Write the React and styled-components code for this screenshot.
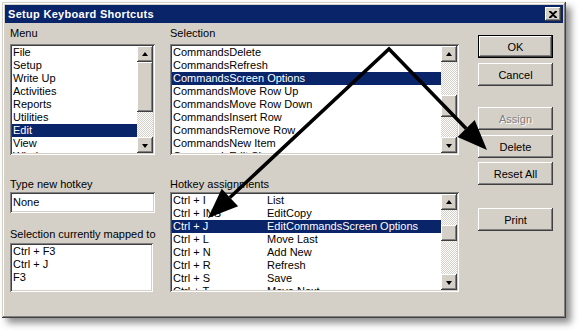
import styled, { createGlobalStyle, css } from "styled-components";

const GlobalStyle = createGlobalStyle`
  body {
    margin: 0;
    background: #ffffff;
    font-family: "Liberation Sans", Arial, sans-serif;
  }
`;

const navy = "#0a246a";
const face = "#d4d0c8";

const raised = css`
  box-shadow: inset -1px -1px #404040, inset 1px 1px #ffffff,
    inset -2px -2px #808080, inset 2px 2px ${face};
`;

const sunken = css`
  box-shadow: inset 1px 1px #808080, inset -1px -1px #ffffff,
    inset 2px 2px #404040, inset -2px -2px ${face};
`;

// Page and window
const Page = styled.div`
  position: relative;
  width: 580px;
  height: 332px;
  padding: 2px 0 0 2px;
  box-sizing: border-box;
`;

const Window = styled.div`
  width: 564px;
  height: 316px;
  box-sizing: border-box;
  background: ${face};
  padding: 3px;
  display: flex;
  flex-direction: column;
  box-shadow: inset -1px -1px #404040, inset 1px 1px ${face},
    inset -2px -2px #808080, inset 2px 2px #ffffff,
    5px 5px 7px rgba(0, 0, 0, 0.45);
`;

const TitleBar = styled.div`
  height: 18px;
  background: ${navy};
  display: flex;
  align-items: center;
  justify-content: space-between;
  padding: 0 2px 0 3px;
`;

const Title = styled.span`
  color: #ffffff;
  font-weight: bold;
  font-size: 11px;
  letter-spacing: 0.3px;
`;

const CloseButton = styled.div`
  width: 16px;
  height: 14px;
  background: ${face};
  ${raised};
  display: flex;
  align-items: center;
  justify-content: center;
`;

// Dialog body
const Body = styled.div`
  flex: 1;
  display: grid;
  grid-template-columns: 145px 289px 75px;
  column-gap: 15px;
  padding: 4px 0 0 5px;
  font-size: 11px;
  color: #000;
`;

const Column = styled.div`
  display: flex;
  flex-direction: column;
  align-items: flex-start;
`;

const ButtonColumn = styled(Column)`
  margin-left: 4px;
`;

const Label = styled.div`
  height: 13px;
  line-height: 13px;
  margin-top: ${(p) => p.$top || 0}px;
  margin-bottom: ${(p) => p.$gap || 0}px;
  white-space: nowrap;
`;

const ListBox = styled.div`
  width: ${(p) => p.$width}px;
  height: ${(p) => p.$height}px;
  box-sizing: border-box;
  padding: 2px;
  background: #ffffff;
  ${sunken};
  display: flex;
  overflow: hidden;
`;

const Items = styled.div`
  flex: 1;
  overflow: hidden;
  min-width: 0;
`;

const Item = styled.div`
  height: 13px;
  line-height: 13px;
  padding-left: 1px;
  white-space: nowrap;
  display: flex;
  background: ${(p) => (p.$selected ? navy : "transparent")};
  color: ${(p) => (p.$selected ? "#ffffff" : "#000000")};
`;

const KeyCell = styled.span`
  width: 94px;
  flex-shrink: 0;
`;

const TextBox = styled.div`
  width: 145px;
  height: 21px;
  box-sizing: border-box;
  background: #ffffff;
  ${sunken};
  padding: 0 3px;
  line-height: 21px;
`;

// Scroll bar
const ScrollBar = styled.div`
  width: 16px;
  display: flex;
  flex-direction: column;
  flex-shrink: 0;
`;

const ScrollButton = styled.div`
  width: 16px;
  height: 16px;
  box-sizing: border-box;
  background: ${face};
  ${raised};
  display: flex;
  align-items: center;
  justify-content: center;
  flex-shrink: 0;
`;

const Arrow = styled.span`
  width: 0;
  height: 0;
  border-left: 3.5px solid transparent;
  border-right: 3.5px solid transparent;
  ${(p) =>
    p.$down
      ? "border-top: 4px solid #000; margin-top: 1px;"
      : "border-bottom: 4px solid #000; margin-bottom: 1px;"}
`;

const Track = styled.div`
  height: ${(p) => (p.$fill ? "auto" : `${p.$size}px`)};
  flex: ${(p) => (p.$fill ? 1 : "none")};
  background-color: #ffffff;
  background-image: conic-gradient(${face} 25%, #ffffff 0 50%, ${face} 0 75%, #ffffff 0);
  background-size: 2px 2px;
`;

const Thumb = styled.div`
  height: ${(p) => p.$size}px;
  box-sizing: border-box;
  background: ${face};
  ${raised};
  flex-shrink: 0;
`;

// Buttons
const Button = styled.div`
  width: 75px;
  height: 23px;
  box-sizing: border-box;
  margin-top: ${(p) => p.$top}px;
  background: ${face};
  display: flex;
  align-items: center;
  justify-content: center;
  ${(p) =>
    p.$default
      ? css`
          border: 1px solid #000;
          box-shadow: inset -1px -1px #404040, inset 1px 1px #ffffff,
            inset -2px -2px #808080;
        `
      : raised}
  color: ${(p) => (p.$disabled ? "#808080" : "#000")};
  text-shadow: ${(p) => (p.$disabled ? "1px 1px #ffffff" : "none")};
`;

const Overlay = styled.svg`
  position: absolute;
  left: 0;
  top: 0;
  pointer-events: none;
`;

function Scroll({ before, thumb }) {
  return (
    <ScrollBar>
      <ScrollButton>
        <Arrow />
      </ScrollButton>
      {before > 0 && <Track $size={before} />}
      <Thumb $size={thumb} />
      <Track $fill />
      <ScrollButton>
        <Arrow $down />
      </ScrollButton>
    </ScrollBar>
  );
}

const menus = ["File", "Setup", "Write Up", "Activities", "Reports", "Utilities", "Edit", "View", "Window"];

const selections = [
  "CommandsDelete",
  "CommandsRefresh",
  "CommandsScreen Options",
  "CommandsMove Row Up",
  "CommandsMove Row Down",
  "CommandsInsert Row",
  "CommandsRemove Row",
  "CommandsNew Item",
  "CommandsEdit Sheet",
];

const hotkeys = [
  ["Ctrl + I", "List"],
  ["Ctrl + INS", "EditCopy"],
  ["Ctrl + J", "EditCommandsScreen Options"],
  ["Ctrl + L", "Move Last"],
  ["Ctrl + N", "Add New"],
  ["Ctrl + R", "Refresh"],
  ["Ctrl + S", "Save"],
  ["Ctrl + T", "Move Next"],
];

const mapped = ["Ctrl + F3", "Ctrl + J", "F3"];

export default function App() {
  return (
    <Page>
      <GlobalStyle />
      <Window>
        <TitleBar>
          <Title>Setup Keyboard Shortcuts</Title>
          <CloseButton>
            <svg width="8" height="7" viewBox="0 0 8 7">
              <path d="M0 0h2l2 2 2-2h2v1L5 3.5 8 6v1H6L4 5 2 7H0V6l3-2.5L0 1z" fill="#000" />
            </svg>
          </CloseButton>
        </TitleBar>
        <Body>
          <Column>
            <Label $gap={4}>Menu</Label>
            <ListBox $width={145} $height={111}>
              <Items>
                {menus.map((m) => (
                  <Item key={m} $selected={m === "Edit"}>
                    {m}
                  </Item>
                ))}
              </Items>
              <Scroll before={0} thumb={50} />
            </ListBox>
            <Label $top={23} $gap={1}>Type new hotkey</Label>
            <TextBox>None</TextBox>
            <Label $top={15} $gap={2}>Selection currently mapped to</Label>
            <ListBox $width={143} $height={49}>
              <Items>
                {mapped.map((m) => (
                  <Item key={m}>{m}</Item>
                ))}
              </Items>
            </ListBox>
          </Column>
          <Column>
            <Label $gap={4}>Selection</Label>
            <ListBox $width={289} $height={111}>
              <Items>
                {selections.map((s) => (
                  <Item key={s} $selected={s === "CommandsScreen Options"}>
                    {s}
                  </Item>
                ))}
              </Items>
              <Scroll before={33} thumb={22} />
            </ListBox>
            <Label $top={23} $gap={1}>Hotkey assignments</Label>
            <ListBox $width={289} $height={100}>
              <Items>
                {hotkeys.map(([k, c]) => (
                  <Item key={k} $selected={k === "Ctrl + J"}>
                    <KeyCell>{k}</KeyCell>
                    {c}
                  </Item>
                ))}
              </Items>
              <Scroll before={15} thumb={16} />
            </ListBox>
          </Column>
          <ButtonColumn>
            <Button $default $top={8}>OK</Button>
            <Button $top={5}>Cancel</Button>
            <Button $top={21} $disabled>Assign</Button>
            <Button $top={5}>Delete</Button>
            <Button $top={4}>Reset All</Button>
            <Button $top={23}>Print</Button>
          </ButtonColumn>
        </Body>
      </Window>
      <Overlay width="580" height="332" viewBox="0 0 580 332">
        <polyline
          points="229.9,197.5 389,49 466.1,128.5"
          fill="none"
          stroke="#000"
          strokeWidth="3.5"
          strokeLinejoin="miter"
        />
        <polygon points="208,218 238.1,206.3 221.7,188.7" fill="#000" />
        <polygon points="487,150 457.5,136.9 474.7,120.1" fill="#000" />
      </Overlay>
    </Page>
  );
}
